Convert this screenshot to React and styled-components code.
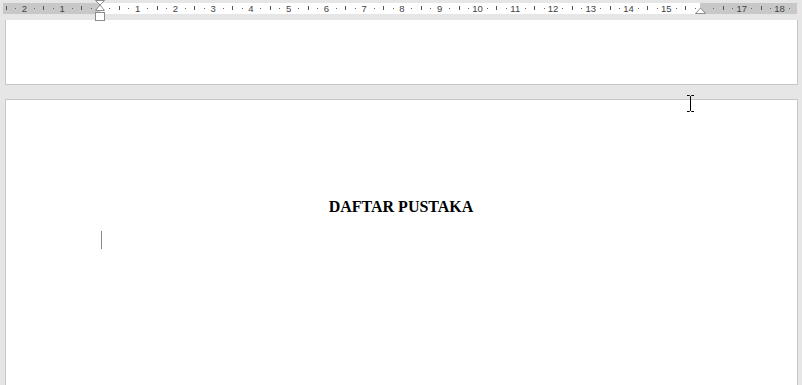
import React from 'react';
import styled, { createGlobalStyle } from 'styled-components';

const GlobalStyle = createGlobalStyle`
  html, body {
    margin: 0;
    padding: 0;
    background: #e6e6e6;
    overflow: hidden;
  }
  body {
    width: 802px;
    height: 385px;
  }
`;

const CM = 37.75;
const ORIGIN = 100;

const Window = styled.div`
  position: relative;
  width: 802px;
  height: 385px;
  display: flex;
  flex-direction: column;
  background: #e6e6e6;
  overflow: hidden;
`;

const RulerBar = styled.div`
  position: relative;
  height: 20px;
  flex: none;
  padding: 3px 5px 0 3px;
  box-sizing: border-box;
  background: #e6e6e6;
  z-index: 2;
`;

const RulerStrip = styled.div`
  display: flex;
  height: 11px;
`;

const RulerSegment = styled.div`
  width: ${(p) => (p.$width ? `${p.$width}px` : 'auto')};
  flex: ${(p) => (p.$width ? 'none' : '1')};
  background: ${(p) => (p.$margin ? '#c8c8c8' : '#ffffff')};
`;

const RulerMarks = styled.svg`
  position: absolute;
  left: 0;
  top: 0;
  width: 802px;
  height: 22px;
  overflow: visible;
  font-family: 'Liberation Sans', Arial, sans-serif;
  font-size: 9.5px;
`;

const PageTop = styled.div`
  height: 65px;
  flex: none;
  margin: 0 4px 0 5px;
  background: #ffffff;
  border: 1px solid #c6c6c6;
  border-top: none;
  box-sizing: border-box;
`;

const PageGap = styled.div`
  height: 14px;
  flex: none;
`;

const Page = styled.div`
  flex: 1;
  margin: 0 4px 0 5px;
  padding: 0 96px 0 95px;
  background: #ffffff;
  border: 1px solid #c6c6c6;
  border-bottom: none;
  display: flex;
  flex-direction: column;
`;

const Heading = styled.h1`
  margin: 98px 0 0;
  font-family: 'Liberation Serif', 'Times New Roman', serif;
  font-size: 16px;
  line-height: 18px;
  font-weight: bold;
  text-align: center;
  color: #000;
`;

const Caret = styled.div`
  width: 1px;
  height: 18px;
  margin-top: 15px;
  background: #8a8a8a;
`;

const MousePointer = styled.svg`
  position: absolute;
  left: 686px;
  top: 95px;
  width: 9px;
  height: 17px;
`;

function Ruler() {
  const marks = [];
  for (let q = -12; q <= 80; q++) {
    const x = ORIGIN + (q * CM) / 4;
    if (x < 4 || x > 796) continue;
    const mod = ((q % 4) + 4) % 4;
    if (q === 0 || q === 64) continue;
    if (mod === 0) {
      marks.push(
        <text key={q} x={x} y={11.5} textAnchor="middle" fill="#444">
          {Math.abs(q / 4)}
        </text>
      );
    } else if (mod === 2) {
      marks.push(
        <rect key={q} x={Math.round(x)} y={6} width={1} height={4} fill="#555" />
      );
    } else {
      marks.push(
        <rect key={q} x={Math.round(x)} y={8} width={1} height={1} fill="#666" />
      );
    }
  }

  return (
    <RulerBar>
      <RulerStrip>
        <RulerSegment $margin $width={97} />
        <RulerSegment $width={600} />
        <RulerSegment $margin />
      </RulerStrip>
      <RulerMarks viewBox="0 0 802 22">
        {marks}
        <g fill="#ffffff" stroke="#8c8c8c" strokeWidth="1">
          <path d="M95.5 0.5 H104.5 L100 5 Z" />
          <path d="M100 5 L104.5 10.5 H95.5 Z" />
          <rect x="95.5" y="12.5" width="9" height="8" />
          <path d="M700.5 8 L705.5 13.5 H695.5 Z" />
        </g>
      </RulerMarks>
    </RulerBar>
  );
}

export default function App() {
  return (
    <Window>
      <GlobalStyle />
      <Ruler />
      <PageTop />
      <PageGap />
      <Page>
        <Heading>DAFTAR PUSTAKA</Heading>
        <Caret />
      </Page>
      <MousePointer viewBox="0 0 9 17">
        <path
          d="M1 0.5 H3.5 L4.5 1.5 L5.5 0.5 H8 M4.5 1.5 V15.5 M1 16.5 H3.5 L4.5 15.5 L5.5 16.5 H8"
          fill="none"
          stroke="#000"
          strokeWidth="1"
        />
      </MousePointer>
    </Window>
  );
}
